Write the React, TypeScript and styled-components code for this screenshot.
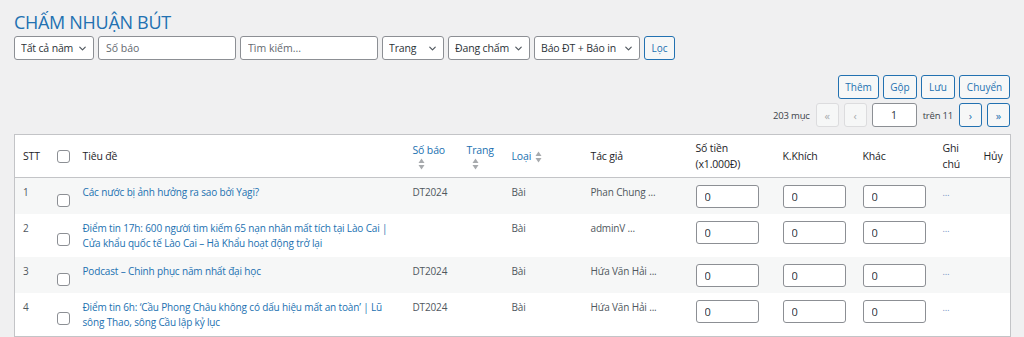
import styled, { createGlobalStyle } from "styled-components";
import { ChevronDown } from "lucide-react";

type Row = {
  stt: number;
  title: string;
  soBao: string;
  trang: string;
  loai: string;
  tacGia: string;
};

const rows: Row[] = [
  { stt: 1, title: "Các nước bị ảnh hưởng ra sao bởi Yagi?", soBao: "DT2024", trang: "", loai: "Bài", tacGia: "Phan Chung ..." },
  {
    stt: 2,
    title: "Điểm tin 17h: 600 người tìm kiếm 65 nạn nhân mất tích tại Lào Cai | Cửa khẩu quốc tế Lào Cai – Hà Khẩu hoạt động trở lại",
    soBao: "",
    trang: "",
    loai: "Bài",
    tacGia: "adminV ...",
  },
  { stt: 3, title: "Podcast – Chinh phục năm nhất đại học", soBao: "DT2024", trang: "", loai: "Bài", tacGia: "Hứa Văn Hải ..." },
  {
    stt: 4,
    title: "Điểm tin 6h: ‘Cầu Phong Châu không có dấu hiệu mất an toàn’ | Lũ sông Thao, sông Cầu lập kỷ lục",
    soBao: "DT2024",
    trang: "",
    loai: "Bài",
    tacGia: "Hứa Văn Hải ...",
  },
];

const colWidths = [34, 26, 330, 54, 45, 79, 105, 87, 80, 80, 41, 35];

const SortIcon = ({ stacked }: { stacked?: boolean }) => (
  <SortWrap $stacked={stacked}>
    <svg width="7" height="12" viewBox="0 0 7 12">
      <path d="M3.5 0.5 L6.5 5 L0.5 5 Z" fill="#a7aaad" />
      <path d="M0.5 7 L6.5 7 L3.5 11.5 Z" fill="#a7aaad" />
    </svg>
  </SortWrap>
);

const Select = ({ label, width }: { label: string; width: number }) => (
  <SelectWrap style={{ width }}>
    <SelectBox defaultValue={label}>
      <option>{label}</option>
    </SelectBox>
    <Chevron>
      <ChevronDown size={11} strokeWidth={2.6} />
    </Chevron>
  </SelectWrap>
);

const App = () => {
  return (
    <>
      <GlobalStyle />
      <Page>
        <Title>CHẤM NHUẬN BÚT</Title>

        <FilterBar>
          <Select label="Tất cả năm" width={80} />
          <TextInput placeholder="Số báo" $w={138} />
          <TextInput placeholder="Tìm kiếm..." $w={138} />
          <Select label="Trang" width={62} />
          <Select label="Đang chấm" width={82} />
          <Select label="Báo ĐT + Báo in" width={106} />
          <Button $w={31}>Lọc</Button>
        </FilterBar>

        <Actions>
          <Button $w={41}>Thêm</Button>
          <Button $w={34}>Gộp</Button>
          <Button $w={34}>Lưu</Button>
          <Button $w={51}>Chuyển</Button>
        </Actions>

        <Pagination>
          <Count>203 mục</Count>
          <PageButton disabled>«</PageButton>
          <PageButton disabled>‹</PageButton>
          <PageInput defaultValue="1" />
          <Count>trên 11</Count>
          <PageButton>›</PageButton>
          <PageButton>»</PageButton>
        </Pagination>

        <Table>
          <colgroup>
            {colWidths.map((w, i) => (
              <col key={i} style={{ width: w }} />
            ))}
          </colgroup>
          <thead>
            <tr>
              <Th>STT</Th>
              <Th $center>
                <Check type="checkbox" />
              </Th>
              <Th>Tiêu đề</Th>
              <Th $sortable>
                Số báo
                <SortIcon stacked />
              </Th>
              <Th $sortable>
                Trang
                <SortIcon stacked />
              </Th>
              <Th $sortable>
                Loại
                <SortIcon />
              </Th>
              <Th>Tác giả</Th>
              <Th>
                Số tiền
                <br />
                (x1.000Đ)
              </Th>
              <Th>K.Khích</Th>
              <Th>Khác</Th>
              <Th>
                Ghi
                <br />
                chú
              </Th>
              <Th>Hủy</Th>
            </tr>
          </thead>
          <tbody>
            {rows.map((row, i) => (
              <Tr key={row.stt} $striped={i % 2 === 0}>
                <Td>{row.stt}</Td>
                <CheckCell>
                  <RowCheck type="checkbox" />
                </CheckCell>
                <Td>
                  <TitleLink href="#">{row.title}</TitleLink>
                </Td>
                <Td>{row.soBao}</Td>
                <Td>{row.trang}</Td>
                <Td>{row.loai}</Td>
                <Td>{row.tacGia}</Td>
                <Td>
                  <MoneyInput defaultValue="0" />
                </Td>
                <Td>
                  <MoneyInput defaultValue="0" />
                </Td>
                <Td>
                  <MoneyInput defaultValue="0" />
                </Td>
                <Td>
                  <Note>…</Note>
                </Td>
                <Td />
              </Tr>
            ))}
          </tbody>
        </Table>
      </Page>
    </>
  );
};

export default App;

/*
Styles
*/

const GlobalStyle = createGlobalStyle`
  body {
    margin: 0;
    background: #f0f0f1;
    color: #3c434a;
    font-family: "Open Sans", "Noto Sans", sans-serif;
    font-size: 10px;
    letter-spacing: -0.15px;
  }
  * {
    box-sizing: border-box;
  }
`;

const Page = styled.div`
  padding: 9px 14px 0;
`;

const Title = styled.h1`
  margin: 0 0 1px;
  font-size: 18px;
  line-height: 26px;
  font-weight: 400;
  letter-spacing: -0.3px;
  color: #2271b1;
`;

const FilterBar = styled.div`
  display: flex;
  gap: 4px;
  height: 24px;
`;

const SelectWrap = styled.div`
  position: relative;
  height: 24px;
`;

const SelectBox = styled.select`
  appearance: none;
  width: 100%;
  height: 24px;
  padding: 0 16px 0 6px;
  border: 1px solid #8c8f94;
  border-radius: 3px;
  background: #fff;
  color: #2c3338;
  font: inherit;
  font-size: 10.5px;
  letter-spacing: -0.15px;
`;

const Chevron = styled.span`
  position: absolute;
  right: 6px;
  top: 7px;
  color: #50575e;
  pointer-events: none;
  display: flex;
`;

const TextInput = styled.input<{ $w: number }>`
  width: ${(p) => p.$w}px;
  height: 24px;
  padding: 0 7px;
  border: 1px solid #8c8f94;
  border-radius: 3px;
  background: #fff;
  font: inherit;
  font-size: 10.5px;
  color: #2c3338;
  &::placeholder {
    color: #646970;
  }
`;

const Button = styled.button<{ $w: number }>`
  width: ${(p) => p.$w}px;
  height: 24px;
  padding: 0;
  border: 1px solid #2271b1;
  border-radius: 3px;
  background: #f6f7f7;
  color: #2271b1;
  font: inherit;
  font-size: 10px;
`;

const Actions = styled.div`
  display: flex;
  justify-content: flex-end;
  gap: 4px;
  margin-top: 15px;
`;

const Pagination = styled.div`
  display: flex;
  justify-content: flex-end;
  align-items: center;
  gap: 5px;
  margin-top: 4px;
  height: 24px;
`;

const Count = styled.span`
  color: #3c434a;
  font-size: 9.5px;
  letter-spacing: -0.2px;
  margin: 0 1px;
`;

const PageButton = styled.button`
  width: 23px;
  height: 24px;
  padding: 0;
  border: 1px solid ${(p) => (p.disabled ? "#dcdcde" : "#2271b1")};
  border-radius: 3px;
  background: #f6f7f7;
  color: ${(p) => (p.disabled ? "#a7aaad" : "#2271b1")};
  font: inherit;
  font-size: 11px;
`;

const PageInput = styled.input`
  width: 45px;
  height: 24px;
  text-align: center;
  border: 1px solid #8c8f94;
  border-radius: 3px;
  background: #fff;
  font: inherit;
  font-size: 10.5px;
  color: #2c3338;
`;

const Table = styled.table`
  width: 996px;
  margin-top: 7px;
  table-layout: fixed;
  border-collapse: collapse;
  background: #fff;
  border: 1px solid #c3c4c7;
`;

const Th = styled.th<{ $sortable?: boolean; $center?: boolean }>`
  padding: 5px 8px;
  height: 43px;
  line-height: 16px;
  text-align: ${(p) => (p.$center ? "center" : "left")};
  vertical-align: middle;
  font-weight: 400;
  font-size: 10.5px;
  color: ${(p) => (p.$sortable ? "#2271b1" : "#1d2327")};
  border-bottom: 1px solid #c3c4c7;
`;

const SortWrap = styled.span<{ $stacked?: boolean }>`
  display: ${(p) => (p.$stacked ? "block" : "inline-block")};
  margin-left: ${(p) => (p.$stacked ? "5px" : "4px")};
  line-height: 12px;
  vertical-align: middle;
  svg {
    display: block;
  }
`;

const Tr = styled.tr<{ $striped: boolean }>`
  background: ${(p) => (p.$striped ? "#f6f7f7" : "#fff")};
`;

const Td = styled.td`
  padding: 7px 8px 6px;
  line-height: 15px;
  vertical-align: top;
  text-align: left;
  color: #50575e;
  font-size: 10px;
`;

const CheckCell = styled(Td)`
  vertical-align: middle;
  text-align: center;
`;

const Check = styled.input`
  appearance: none;
  display: block;
  margin: 0 auto;
  width: 13px;
  height: 13px;
  border: 1px solid #8c8f94;
  border-radius: 3px;
  background: #fff;
`;

const RowCheck = styled(Check)`
  margin-top: 7px;
`;

const TitleLink = styled.a`
  color: #2271b1;
  text-decoration: none;
`;

const MoneyInput = styled.input`
  display: block;
  width: 63px;
  height: 23px;
  padding: 0 8px;
  border: 1px solid #8c8f94;
  border-radius: 3px;
  background: #fff;
  font: inherit;
  font-size: 11px;
  color: #2c3338;
`;

const Note = styled.span`
  color: #6f8cc2;
  font-size: 9px;
  letter-spacing: 0;
`;
